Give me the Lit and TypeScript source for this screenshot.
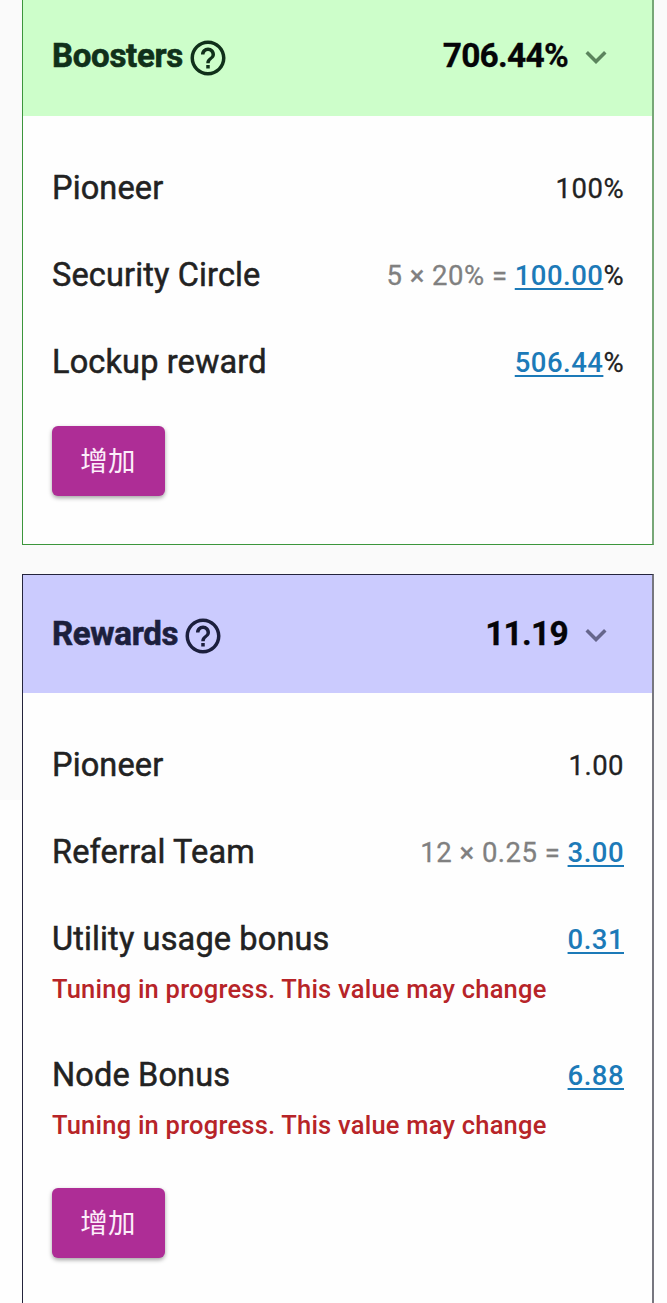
import { LitElement, html, css, svg, nothing } from "lit";
import { customElement, property } from "lit/decorators.js";
import { classMap } from "lit/directives/class-map.js";

interface Row {
  label: string;
  formula?: string;
  value: string;
  link?: boolean;
  suffix?: string;
  warning?: string;
}

const TUNING = "Tuning in progress. This value may change";

const boosters: Row[] = [
  { label: "Pioneer", value: "100%" },
  { label: "Security Circle", formula: "5 × 20% =", value: "100.00", link: true, suffix: "%" },
  { label: "Lockup reward", value: "506.44", link: true, suffix: "%" },
];

const rewards: Row[] = [
  { label: "Pioneer", value: "1.00" },
  { label: "Referral Team", formula: "12 × 0.25 =", value: "3.00", link: true },
  { label: "Utility usage bonus", value: "0.31", link: true, warning: TUNING },
  { label: "Node Bonus", value: "6.88", link: true, warning: TUNING },
];

const helpIcon = svg`<path fill="currentColor" d="M11 18h2v-2h-2v2zm1-16C6.48 2 2 6.48 2 12s4.48 10 10 10 10-4.48 10-10S17.52 2 12 2zm0 18c-4.41 0-8-3.59-8-8s3.59-8 8-8 8 3.59 8 8-3.59 8-8 8zm0-14c-2.21 0-4 1.79-4 4h2c0-1.1.9-2 2-2s2 .9 2 2c0 2-3 1.75-3 5h2c0-2.25 3-2.5 3-5 0-2.21-1.79-4-4-4z"/>`;
const chevronIcon = svg`<path fill="currentColor" d="M16.59 8.59 12 13.17 7.41 8.59 6 10l6 6 6-6z"/>`;

@customElement("detail-row")
class DetailRow extends LitElement {
  @property({ attribute: false }) row!: Row;

  static styles = css`
    :host { display: block; padding: 23px 0; }
    :host([noted]) { padding-bottom: 26.5px; }
    .line { display: flex; justify-content: space-between; align-items: center; height: 41px; white-space: nowrap; }
    .label { font-size: 32.5px; font-weight: 400; line-height: 41px; letter-spacing: 0.14px; color: #222; -webkit-text-stroke: 0.5px #222; }
    .value { font-size: 27.5px; font-weight: 400; line-height: 41px; letter-spacing: 0.47px; color: #222; -webkit-text-stroke: 0.3px currentColor; }
    .formula { color: #808080; }
    .link { font-weight: 500; color: #1c7ab8; text-decoration: underline; text-decoration-thickness: 2px; text-underline-offset: 3px; -webkit-text-stroke-width: 0; }
    .warning { margin-top: 13.5px; font-size: 25.5px; line-height: 32px; font-weight: 500; letter-spacing: 0.22px; color: #b72428; white-space: nowrap; }
  `;

  render() {
    const r = this.row;
    return html`
      <div class="line">
        <span class="label">${r.label}</span>
        <span class="value">${r.formula ? html`<span class="formula">${r.formula} </span>` : nothing}<span
            class=${classMap({ link: !!r.link })}>${r.value}</span>${r.suffix ?? nothing}</span>
      </div>
      ${r.warning ? html`<div class="warning">${r.warning}</div>` : nothing}
    `;
  }
}

@customElement("rate-card")
class RateCard extends LitElement {
  @property() heading = "";
  @property() total = "";
  @property({ attribute: false }) rows: Row[] = [];

  static styles = css`
    :host { display: block; box-sizing: border-box; border: 1px solid var(--edge); border-right: 2px solid var(--edge-soft); background: #fefefe; }
    .header { display: flex; align-items: center; box-sizing: border-box; height: var(--header-height); padding: 0 35px var(--header-drop) 29px; background: var(--tint); font-weight: 700; font-size: 33px; line-height: 40px; }
    .heading { color: var(--ink); letter-spacing: -0.3px; -webkit-text-stroke: 0.6px var(--ink); }
    .help { width: 42px; height: 42px; margin: 4px auto 0 4.4px; color: var(--ink); }
    .total { color: #050508; font-size: 33.5px; letter-spacing: -0.75px; -webkit-text-stroke: 0.3px #050508; }
    .chevron { width: 42px; height: 42px; margin: 2px 0 0 7px; color: var(--arrow); }
    .body { padding: 28.5px 28px 48px 29px; }
    .add { display: block; margin-top: 20.5px; width: 113px; height: 70px; padding: 0 1px 5px 0; border: 0; border-radius: 6px; background: #ae2d96; color: #fceefa; font: 400 27.5px/40px "Noto Sans CJK SC", sans-serif; letter-spacing: 0.2px; box-shadow: 0 2px 4px rgba(0, 0, 0, 0.36); }
  `;

  render() {
    return html`
      <div class="header">
        <span class="heading">${this.heading}</span>
        <svg class="help" viewBox="0 0 24 24">${helpIcon}</svg>
        <span class="total">${this.total}</span>
        <svg class="chevron" viewBox="0 0 24 24">${chevronIcon}</svg>
      </div>
      <div class="body">
        ${this.rows.map((r) => html`<detail-row ?noted=${!!r.warning} .row=${r}></detail-row>`)}
        <button class="add">增加</button>
      </div>
    `;
  }
}

@customElement("app-root")
class AppRoot extends LitElement {
  static styles = css`
    :host { display: flex; flex-direction: column; gap: 29px; box-sizing: border-box; height: 1303px; padding: 0 13px 0 22px; overflow: hidden; font-family: Roboto, "Noto Sans CJK SC", sans-serif; background: linear-gradient(#fafafa 800px, #fefefe 800px); }
    rate-card { flex: none; }
    .boosters { --edge: #3c963c; --edge-soft: #77a777; --tint: #cdfeca; --ink: #10301a; --arrow: #5b845d; --header-height: 116px; --header-drop: 4px; border-top: 0; }
    .rewards { --edge: #24243c; --edge-soft: #77777f; --tint: #cbcbfe; --ink: #1c1f3d; --arrow: #66668c; --header-height: 118px; --header-drop: 1px; }
  `;

  render() {
    return html`
      <rate-card class="boosters" heading="Boosters" total="706.44%" .rows=${boosters}></rate-card>
      <rate-card class="rewards" heading="Rewards" total="11.19" .rows=${rewards}></rate-card>
    `;
  }
}
